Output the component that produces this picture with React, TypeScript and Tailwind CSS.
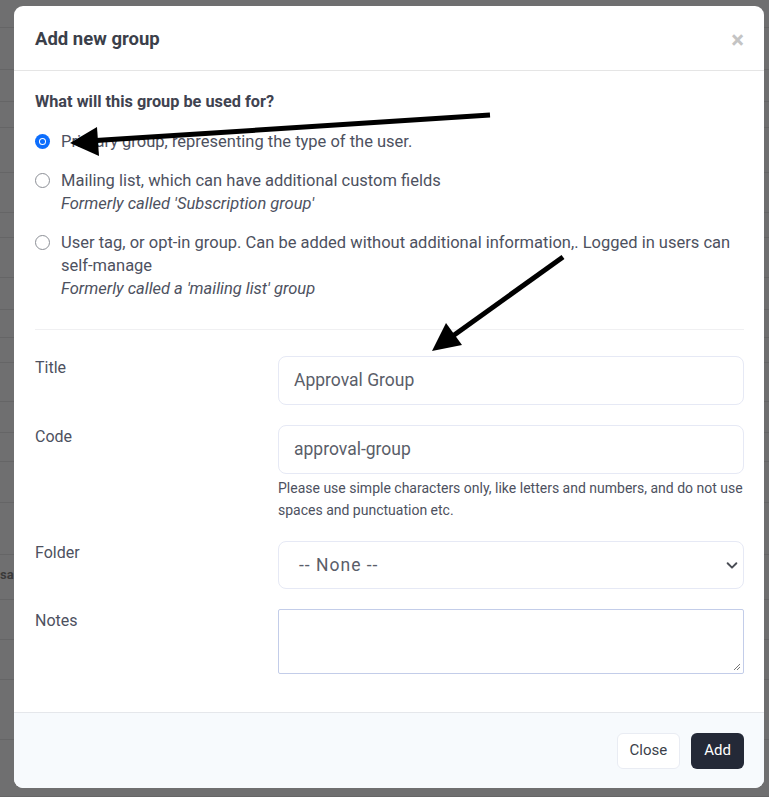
import React from "react";

const rows = [28, 42, 32, 26, 45, 40, 25, 40, 32, 28, 25, 39, 31, 29, 41, 52, 45, 40, 40, 60, 57];

const Radio = ({ checked }: { checked?: boolean }) =>
  checked ? (
    <span className="mt-[4px] flex h-[15px] w-[15px] shrink-0 items-center justify-center rounded-full bg-[#0d6efd]">
      <span className="h-[7px] w-[7px] rounded-full bg-white p-[1px]">
        <span className="block h-full w-full rounded-full bg-[#0d6efd]" />
      </span>
    </span>
  ) : (
    <span className="mt-[4px] h-[15px] w-[15px] shrink-0 rounded-full border border-[#8c8f96] bg-white" />
  );

const Option = ({ checked, children }: { checked?: boolean; children: React.ReactNode }) => (
  <label className="flex gap-[11px] text-[16.5px] leading-[23px] text-[#4d5160]">
    <Radio checked={checked} />
    <span>{children}</span>
  </label>
);

const Field = ({ label, children }: { label: string; children: React.ReactNode }) => (
  <div className="grid grid-cols-[243px_1fr]">
    <div className="pt-[1px] text-[16px] leading-[22px] text-[#4d5160]">{label}</div>
    <div>{children}</div>
  </div>
);

const App = () => {
  return (
    <div className="relative h-[797px] w-[769px] overflow-hidden bg-[#6f6f70] font-['Roboto',sans-serif]">
      {/* page behind the overlay */}
      <div className="flex flex-col">
        {rows.map((h, i) => (
          <div key={i} className="border-b border-[#656566] text-[13px] font-bold text-[#3a3a3a]" style={{ height: h }}>
            {i === 16 ? <span className="pl-0 leading-[40px]">sa</span> : null}
          </div>
        ))}
      </div>

      {/* modal */}
      <div className="absolute left-[14px] top-[6px] flex h-[782px] w-[750px] flex-col overflow-hidden rounded-[9px] bg-white">
        <div className="flex h-[65px] items-center justify-between border-b border-[#e5e5e5] pl-[21px] pr-[20px] pt-[3px]">
          <h2 className="text-[18.5px] font-bold text-[#3b3f4a]">Add new group</h2>
          <span className="text-[24px] font-bold leading-none text-[#c4c4c4]">×</span>
        </div>

        <div className="flex-1 pl-[21px] pr-[20px] pt-[20px]">
          <div className="text-[16.3px] font-bold leading-[22px] text-[#3f4350]">What will this group be used for?</div>
          <div className="mt-[17px] flex flex-col gap-[16px]">
            <Option checked>Primary group, representing the type of the user.</Option>
            <Option>
              Mailing list, which can have additional custom fields
              <br />
              <i>Formerly called 'Subscription group'</i>
            </Option>
            <Option>
              User tag, or opt-in group. Can be added without additional information,. Logged in users can self-manage
              <br />
              <i>Formerly called a 'mailing list' group</i>
            </Option>
          </div>

          <div className="mt-[29px] border-t border-[#f0f0f2]" />

          <div className="mt-[26px] flex flex-col gap-[20px]">
            <Field label="Title">
              <div className="flex h-[49px] items-center rounded-[8px] border border-[#e6e9f5] px-[15px] text-[17.5px] text-[#5a5e69]">
                Approval Group
              </div>
            </Field>
            <Field label="Code">
              <div className="flex h-[49px] items-center rounded-[8px] border border-[#e6e9f5] px-[15px] text-[17.5px] text-[#5a5e69]">
                approval-group
              </div>
              <p className="mt-[3px] text-[14px] leading-[22px] text-[#4d5160]">
                Please use simple characters only, like letters and numbers, and do not use spaces and punctuation etc.
              </p>
            </Field>
            <Field label="Folder">
              <div className="flex h-[48px] items-center justify-between rounded-[8px] border border-[#e6e9f5] pl-[20px] pr-[4px] text-[17.5px] text-[#5a5e69]">
                <span className="tracking-[1px]">-- None --</span>
                <svg width="14" height="14" viewBox="0 0 16 16" fill="none" stroke="#4a4d55" strokeWidth="2.2" strokeLinecap="round" strokeLinejoin="round">
                  <path d="M3 6l5 5 5-5" />
                </svg>
              </div>
            </Field>
            <Field label="Notes">
              <div className="relative h-[65px] rounded-[2px] border border-[#c3cde9]">
                <svg className="absolute bottom-[2px] right-[2px]" width="9" height="9" viewBox="0 0 9 9" stroke="#777" strokeWidth="1">
                  <path d="M8 2L2 8M8 5L5 8" />
                </svg>
              </div>
            </Field>
          </div>
        </div>

        <div className="flex h-[76px] items-center justify-end gap-[11px] border-t border-[#e5e7eb] bg-[#f7fafd] px-[20px]">
          <button className="h-[36px] rounded-[6px] border border-[#e9ecf3] bg-white px-[12px] text-[15px] text-[#3b3f4a]">Close</button>
          <button className="h-[36px] rounded-[6px] bg-[#242937] px-[13px] text-[15px] text-white">Add</button>
        </div>
      </div>

      {/* annotation arrows */}
      <svg className="pointer-events-none absolute inset-0" width="769" height="797" viewBox="0 0 769 797">
        <line x1="490" y1="115" x2="88" y2="141" stroke="#000" strokeWidth="5" />
        <polygon points="70,143 97,127 99,156" fill="#000" />
        <line x1="563" y1="257" x2="450" y2="338" stroke="#000" strokeWidth="5" />
        <polygon points="432,351 446,323 462,345" fill="#000" />
      </svg>
    </div>
  );
};

export default App;
